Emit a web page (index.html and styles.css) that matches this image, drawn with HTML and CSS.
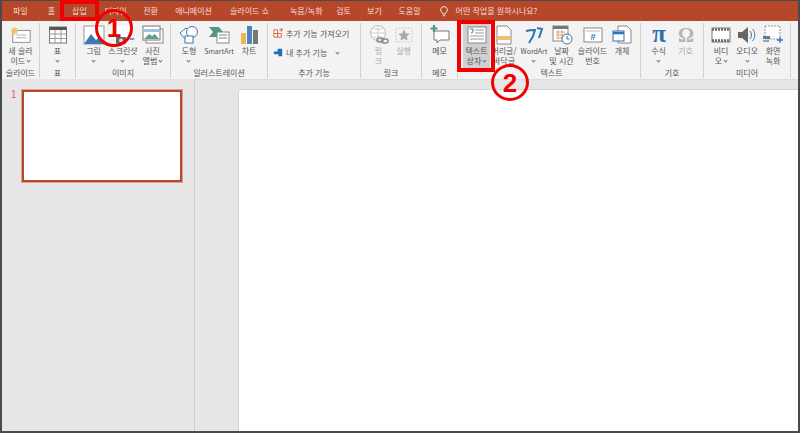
FILE: index.html
```html
<!DOCTYPE html>
<html lang="ko">
<head>
<meta charset="utf-8">
<title>PowerPoint 삽입</title>
<link rel="stylesheet" href="styles.css">
</head>
<body>
<div class="frame">
  <nav class="tabs">
    <span class="tab t-file">파일</span>
    <span class="tab t-home">홈</span>
    <span class="tab t-insert">삽입</span>
    <span class="tab t-design">디자인</span>
    <span class="tab t-trans">전환</span>
    <span class="tab t-anim">애니메이션</span>
    <span class="tab t-show">슬라이드 쇼</span>
    <span class="tab t-rec">녹음/녹화</span>
    <span class="tab t-review">검토</span>
    <span class="tab t-view">보기</span>
    <span class="tab t-help">도움말</span>
    <svg class="bulb" viewBox="0 0 12 14"><path d="M6 1a4 4 0 0 0-2.400 7.200c.6.500.8 1 .8 1.800h3.200c0-.8.2-1.300.8-1.800A4 4 0 0 0 6 1zM4.600 12h2.800" fill="none" stroke="#fff" stroke-width="1"/></svg>
    <span class="tab t-search">어떤 작업을 원하시나요?</span>
  </nav>
  <section class="ribbon">
    <div class="group g1">
      <div class="items">
        <div class="btn w-full">
          <svg class="ico" viewBox="0 0 24 20"><rect x="3" y="5" width="19" height="13" fill="#fff" stroke="#888"/><path d="M7 10h11M7 13h11" stroke="#aaa"/><path d="M5 .5l1 2.500 2.500-1-1 2.500 2.500 1-2.500 1 1 2.500-2.500-1-1 2.500-1-2.500-2.500 1 1-2.500-2.500-1 2.500-1-1-2.500 2.500 1z" fill="#f2c46d"/></svg>
          <span class="lbl">새 슬라<br>이드 <i class="car"></i></span>
        </div>
      </div>
      <div class="gname">슬라이드</div>
    </div>
    <div class="group g2">
      <div class="items">
        <div class="btn w-full">
          <svg class="ico" viewBox="0 0 20 20"><rect x="1.500" y="2" width="17" height="16" fill="#fff" stroke="#777"/><path d="M1.500 3.500h17" stroke="#555" stroke-width="3"/><path d="M1.500 9h17M1.500 13.500h17M7 5v13M13 5v13" stroke="#999"/></svg>
          <span class="lbl">표<br><i class="car"></i></span>
        </div>
      </div>
      <div class="gname">표</div>
    </div>
    <div class="group g3">
      <div class="items">
        <div class="btn w-29">
          <svg class="ico" viewBox="0 0 22 20"><rect x="1" y="1" width="20" height="18" fill="#fff" stroke="#999"/><path d="M1 19l7-10 5 6 3-3 5 7z" fill="#3f78b5"/></svg>
          <span class="lbl">그림<br><i class="car"></i></span>
        </div>
        <div class="btn w-29">
          <svg class="ico" viewBox="0 0 22 20"><rect x="3" y="1" width="17" height="14" fill="#fff"/><path d="M18 14h4" stroke="#3f78b5" stroke-width="1.500"/><rect x="4" y="12" width="10" height="7" rx="1" fill="#666"/><circle cx="9" cy="15.500" r="2" fill="#ddd"/></svg>
          <span class="lbl">스크린샷<br><i class="car"></i></span>
        </div>
        <div class="btn w-29">
          <svg class="ico" viewBox="0 0 22 20"><rect x="4" y="4" width="17" height="14" fill="#fff" stroke="#888"/><rect x="1" y="1" width="17" height="14" fill="#fff" stroke="#777"/><path d="M2 4h15v3H2z" fill="#9fc3df"/><path d="M2 14l5-5 3 2 3-2 4 5z" fill="#5f9e8f"/></svg>
          <span class="lbl">사진<br>앨범 <i class="car"></i></span>
        </div>
      </div>
      <div class="gname">이미지</div>
    </div>
    <div class="group g4">
      <div class="items">
        <div class="btn w-30">
          <svg class="ico" viewBox="0 0 22 20"><path d="M2 8l6-5 5 5-6 6z" fill="#fff" stroke="#3f78b5"/><circle cx="14" cy="7" r="5.500" fill="#fff" stroke="#3f78b5"/><rect x="7" y="11" width="8" height="7" fill="#fff" stroke="#3f78b5"/></svg>
          <span class="lbl">도형<br><i class="car"></i></span>
        </div>
        <div class="btn w-30">
          <svg class="ico" viewBox="0 0 22 20"><path d="M1 2h10l4 5-4 5H1l4-5z" fill="#4f9a86"/><rect x="9" y="7" width="12" height="11" fill="#fff" stroke="#888"/><path d="M11 10h8M11 13h8" stroke="#4f9a86"/></svg>
          <span class="lbl lat">SmartArt</span>
        </div>
        <div class="btn w-30">
          <svg class="ico" viewBox="0 0 22 20"><rect x="3" y="8" width="5" height="11" fill="#efb84e"/><rect x="9" y="1" width="5" height="18" fill="#4a86c0"/><rect x="15" y="5" width="5" height="14" fill="#777"/></svg>
          <span class="lbl">차트</span>
        </div>
      </div>
      <div class="gname">일러스트레이션</div>
    </div>
    <div class="group g5">
      <div class="rows">
        <div class="row">
          <svg class="mini" viewBox="0 0 12 12"><path d="M1 2h4v4H1zM1 6h4v4H1zM5 6h4v4H5z" fill="#fff" stroke="#d0603f"/><path d="M9 0v4M7 2h4" stroke="#d0603f"/></svg>
          <span>추가 기능 가져오기</span>
        </div>
        <div class="row">
          <svg class="mini" viewBox="0 0 12 12"><path d="M1 5h4V2h5v8H6V8H1z" fill="#1f6fb8"/></svg>
          <span>내 추가 기능</span><i class="car car-side"></i>
        </div>
      </div>
      <div class="gname">추가 기능</div>
    </div>
    <div class="group g6">
      <div class="items">
        <div class="btn w-25 off">
          <svg class="ico" viewBox="0 0 22 20"><circle cx="10" cy="8" r="7.500" fill="#fff" stroke="#bbb"/><path d="M2.500 8h15M10 .5v15M5 3c3 2 7 2 10 0M5 13c3-2 7-2 10 0" fill="none" stroke="#ccc"/><rect x="9" y="13" width="6" height="4" rx="2" fill="none" stroke="#888" stroke-width="1.500"/><rect x="14" y="14" width="6" height="4" rx="2" fill="none" stroke="#888" stroke-width="1.500"/></svg>
          <span class="lbl">링<br>크</span>
        </div>
        <div class="btn w-25 off">
          <svg class="ico" viewBox="0 0 22 20"><rect x="3" y="3" width="16" height="14" fill="#f4f4f4" stroke="#ccc" stroke-dasharray="2 1"/><path d="M11 4.500l1.800 3.700 4 .6-2.900 2.800.7 4-3.600-1.900-3.600 1.900.7-4-2.900-2.800 4-.6z" fill="#aaa"/></svg>
          <span class="lbl">실행</span>
        </div>
      </div>
      <div class="gname">링크</div>
    </div>
    <div class="group g7">
      <div class="items">
        <div class="btn w-full">
          <svg class="ico" viewBox="0 0 22 20"><path d="M5 6h15v9H11l-3 3v-3H5z" fill="#fff" stroke="#777"/><path d="M5 0v7M1.500 3.500h7" stroke="#4f9a86" stroke-width="2.200"/></svg>
          <span class="lbl">메모</span>
        </div>
      </div>
      <div class="gname">메모</div>
    </div>
    <div class="group g8">
      <div class="items">
        <div class="btn w-27 on">
          <svg class="ico" viewBox="0 0 22 20"><rect x="2" y="2" width="18" height="16" fill="#fff" stroke="#888"/><path d="M9 5h9M9 8h9M4 11h14M4 14h14" stroke="#999"/><path d="M4 4h3v3l-2 1" fill="none" stroke="#2f75b5"/></svg>
          <span class="lbl">텍스트<br>상자 <i class="car"></i></span>
        </div>
        <div class="btn w-28">
          <svg class="ico" viewBox="0 0 22 20"><path d="M4 1h10l4 4v14H4z" fill="#fff" stroke="#888"/><rect x="5" y="11" width="12" height="4" fill="#efc06a"/></svg>
          <span class="lbl">머리글/<br>바닥글</span>
        </div>
        <div class="btn w-32">
          <svg class="ico" viewBox="0 0 22 20"><path d="M3 6c4-1 7-1 9-1-1 5-3 9-6 13M14 3l5 1-3 9" fill="none" stroke="#2f75b5" stroke-width="2"/></svg>
          <span class="lbl lat">WordArt<br><i class="car"></i></span>
        </div>
        <div class="btn w-23">
          <svg class="ico" viewBox="0 0 22 20"><rect x="2" y="1" width="15" height="15" fill="#fff" stroke="#888"/><path d="M2 2.500h15" stroke="#777" stroke-width="3"/><path d="M5 7h9M5 10h9M5 13h6M7 5v9M11 5v9" stroke="#e0a070"/><circle cx="16" cy="14" r="5" fill="#fff" stroke="#2f75b5"/><path d="M16 11v3h2.500" fill="none" stroke="#666"/></svg>
          <span class="lbl">날짜<br>및 시간</span>
        </div>
        <div class="btn w-39">
          <svg class="ico" viewBox="0 0 22 20"><rect x="2" y="3" width="18" height="14" fill="#fff" stroke="#888"/><path d="M4 6h14" stroke="#bbb"/><text x="11" y="15" class="hash">#</text></svg>
          <span class="lbl">슬라이드<br>번호</span>
        </div>
        <div class="btn w-20">
          <svg class="ico" viewBox="0 0 22 20"><path d="M7 1h9l4 4v13H7z" fill="#fff" stroke="#888"/><rect x="2" y="6" width="11" height="10" fill="#fff" stroke="#2f75b5"/><path d="M2 8h11" stroke="#2f75b5" stroke-width="2.500"/></svg>
          <span class="lbl">개체</span>
        </div>
      </div>
      <div class="gname">텍스트</div>
    </div>
    <div class="group g9">
      <div class="items">
        <div class="btn w-27">
          <svg class="ico" viewBox="0 0 22 20"><text x="11" y="17" class="sym sym-pi">π</text></svg>
          <span class="lbl">수식<br><i class="car"></i></span>
        </div>
        <div class="btn w-27 off">
          <svg class="ico" viewBox="0 0 22 20"><text x="11" y="17" class="sym sym-om">Ω</text></svg>
          <span class="lbl">기호</span>
        </div>
      </div>
      <div class="gname">기호</div>
    </div>
    <div class="group g10">
      <div class="items">
        <div class="btn w-26">
          <svg class="ico" viewBox="0 0 22 20"><rect x="2" y="3" width="18" height="14" fill="#fff" stroke="#777"/><path d="M2 4.500h18M2 15.500h18" stroke="#666" stroke-width="2.500" stroke-dasharray="2 1"/></svg>
          <span class="lbl">비디<br>오 <i class="car"></i></span>
        </div>
        <div class="btn w-26">
          <svg class="ico" viewBox="0 0 22 20"><path d="M2 7h4l6-5v16l-6-5H2z" fill="#666"/><path d="M14 6c2 2 2 6 0 8M16.500 4c3 3 3 9 0 12" fill="none" stroke="#3f78b5"/></svg>
          <span class="lbl">오디오<br><i class="car"></i></span>
        </div>
        <div class="btn w-26">
          <svg class="ico" viewBox="0 0 22 20"><rect x="3" y="1" width="15" height="13" fill="#fff" stroke="#999" stroke-dasharray="2 1"/><rect x="1" y="11" width="7" height="3" fill="#4a7fb0"/><path d="M1 16h6" stroke="#555"/><path d="M18 12v6M15 15h6" stroke="#2f75b5" stroke-width="1.300"/></svg>
          <span class="lbl">화면<br>녹화</span>
        </div>
      </div>
      <div class="gname">미디어</div>
    </div>
  </section>
  <main class="workspace">
    <aside class="thumbs">
      <span class="num">1</span>
      <div class="thumb"></div>
    </aside>
    <div class="canvas">
      <div class="strip"></div>
      <div class="slide"></div>
    </div>
  </main>
</div>
<div class="mark box-1"></div>
<div class="mark box-2"></div>
<div class="mark circle circle-1">1</div>
<div class="mark circle circle-2">2</div>
</body>
</html>
```
FILE: styles.css
```css
* { box-sizing: border-box; }
html, body { margin: 0; padding: 0; }
body {
  width: 800px;
  height: 433px;
  position: relative;
  overflow: hidden;
  font-family: "Noto Sans CJK KR", "Noto Sans", sans-serif;
  font-size: 8px;
  color: #555;
}
.frame {
  width: 800px;
  height: 433px;
  border: 2px solid #4a4a4a;
  border-top-width: 1px;
  display: flex;
  flex-direction: column;
  background: #f3f3f3;
}
.tabs {
  height: 20px;
  flex: none;
  background: #b7472a;
  display: flex;
  align-items: center;
  color: #f6dcd3;
  padding-left: 11px;
}
.tab { white-space: nowrap; line-height: 12px; }
.t-file { margin-right: 20px; }
.t-home { margin-right: 17px; }
.t-insert { margin-right: 17.7px; }
.t-design { margin-right: 16.6px; }
.t-trans { margin-right: 17.2px; }
.t-anim { margin-right: 18px; }
.t-show { margin-right: 21px; }
.t-rec { margin-right: 13.6px; }
.t-review { margin-right: 16.2px; }
.t-view { margin-right: 16.6px; }
.t-help { margin-right: 18px; }
.bulb { width: 10px; height: 13px; margin-right: 7px; flex: none; }
.ribbon {
  height: 58px;
  flex: none;
  display: flex;
  background: #f3f3f3;
  padding-top: 2px;
}
.group {
  display: flex;
  flex-direction: column;
  border-right: 1px solid #d2d2d2;
  height: 55px;
  flex: none;
}
.g1 { width: 38px; }
.g2 { width: 36px; }
.g3 { width: 95px; }
.g4 { width: 97px; }
.g5 { width: 93px; }
.g6 { width: 61px; }
.g7 { width: 36px; }
.g8 { width: 183px; padding-left: 5px; }
.g9 { width: 63px; }
.g10 { width: 87px; }
.items {
  height: 45px;
  flex: none;
  display: flex;
  justify-content: center;
}
.g8 .items { justify-content: flex-start; }
.btn {
  display: flex;
  flex-direction: column;
  align-items: center;
  padding-top: 2px;
  flex: none;
  height: 45px;
}
.w-full { width: 100%; }
.w-20 { width: 20px; }
.w-23 { width: 23px; }
.w-25 { width: 25px; }
.w-26 { width: 26px; }
.w-27 { width: 27px; }
.w-28 { width: 28px; }
.w-29 { width: 29.5px; }
.w-30 { width: 30px; }
.w-32 { width: 32px; }
.w-39 { width: 39px; }
.on { background: #d0d0d0; }
.ico { width: 22px; height: 20px; flex: none; }
.lbl {
  margin-top: 1px;
  line-height: 10px;
  text-align: center;
  white-space: nowrap;
}
.lat { font-size: 7px; }
.car {
  display: inline-block;
  width: 3px;
  height: 3px;
  border-right: 1px solid #777;
  border-bottom: 1px solid #777;
  transform: rotate(45deg);
  vertical-align: 2px;
}
.car-side { margin-left: 7px; }
.off, .off .lbl { color: #aaa; }
.sym {
  font-family: "Liberation Serif", serif;
  font-weight: 700;
  text-anchor: middle;
}
.sym-pi { fill: #2f6fad; font-size: 25px; }
.sym-om { fill: #b5b5b5; font-size: 20px; }
.hash { font: 700 9px "Liberation Sans", sans-serif; fill: #2f75b5; text-anchor: middle; }
.gname {
  height: 10px;
  line-height: 10px;
  text-align: center;
  color: #555;
  white-space: nowrap;
}
.rows {
  height: 45px;
  flex: none;
  display: flex;
  flex-direction: column;
  gap: 7px;
  padding: 4px 0 0 5px;
}
.row {
  display: flex;
  align-items: center;
  gap: 2px;
  height: 12px;
  color: #555;
  white-space: nowrap;
}
.mini { width: 11px; height: 11px; flex: none; }
.workspace {
  flex: 1;
  min-height: 0;
  display: flex;
  background: #e6e6e6;
}
.thumbs {
  width: 193px;
  flex: none;
  border-right: 1px solid #cdcdcd;
  display: flex;
  align-items: flex-start;
  padding: 11px 0 0 9px;
  gap: 8px;
}
.num { color: #d4694c; font: 10px/10px "Liberation Sans", sans-serif; width: 3px; }
.thumb {
  width: 160px;
  height: 92px;
  background: #fff;
  border: 2px solid #b7472a;
  box-shadow: 0 0 0 1px #dca08f;
}
.canvas {
  flex: 1;
  min-width: 0;
  display: flex;
  flex-direction: column;
}
.strip { height: 11px; flex: none; border-top: 1px solid #dcdcdc; }
.slide {
  flex: 1;
  margin-left: 44px;
  background: #fff;
  box-shadow: -1px 0 0 #d4d4d4, 0 -1px 0 #d4d4d4;
}
.mark { position: absolute; }
.box-1 {
  left: 60px;
  top: 0;
  width: 39px;
  height: 21px;
  border: 4px solid #f00000;
}
.box-2 {
  left: 457px;
  top: 20px;
  width: 38px;
  height: 52px;
  border: 4px solid #f00000;
}
.circle {
  border: 3px solid #f00000;
  border-radius: 50%;
  color: #f00000;
  font: 700 26px/1 "Liberation Sans", sans-serif;
  display: flex;
  align-items: center;
  justify-content: center;
}
.circle-1 { left: 95px; top: 9px; width: 38px; height: 38px; }
.circle-2 { left: 491px; top: 64px; width: 38px; height: 37px; }
```
